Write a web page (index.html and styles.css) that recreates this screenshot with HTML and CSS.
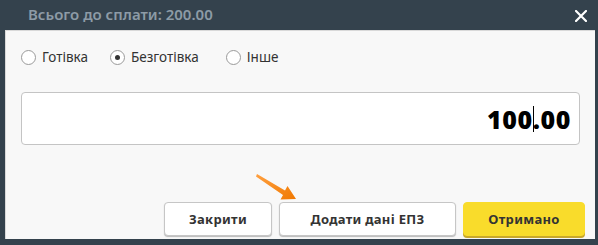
FILE: index.html
```html
<!DOCTYPE html>
<html lang="uk">
<head>
    <meta charset="UTF-8">
    <title>Оплата</title>
    <link rel="stylesheet" href="styles.css">
</head>
<body>
    <div class="dialog">
        <div class="dialog-header">
            <span class="dialog-title">Всього до сплати: 200.00</span>
            <span class="close-btn">
                <svg width="12" height="12" viewBox="0 0 12 12"><path d="M1 1L11 11M11 1L1 11" stroke="#fff" stroke-width="2.2" stroke-linecap="square"/></svg>
            </span>
        </div>
        <div class="dialog-body">
            <div class="pay-types">
                <label class="radio"><span class="radio-circle"></span>Готівка</label>
                <label class="radio"><span class="radio-circle checked"></span>Безготівка</label>
                <label class="radio"><span class="radio-circle"></span>Інше</label>
            </div>
            <div class="amount-box">
                <span class="amount">100<span class="caret"></span>.00</span>
            </div>
            <div class="actions">
                <button class="btn">Закрити</button>
                <button class="btn btn-wide">Додати дані ЕПЗ</button>
                <button class="btn btn-yellow">Отримано</button>
            </div>
            <svg class="hint-arrow" width="44" height="30" viewBox="0 0 44 30">
                <defs>
                    <linearGradient id="ag" x1="0" y1="0" x2="1" y2="1">
                        <stop offset="0" stop-color="#ffa040"/>
                        <stop offset="1" stop-color="#f07800"/>
                    </linearGradient>
                </defs>
                <path d="M1 2 L29 18.5 L31.5 14 L40 27 L24.5 27.5 L27 23 L0 4.5 Z" fill="url(#ag)"/>
            </svg>
        </div>
    </div>
</body>
</html>
```

FILE: styles.css
```css
body {
    margin: 0;
    background-color: #34424d;
    font-family: "Noto Sans", "Open Sans", sans-serif;
}

.dialog {
    width: 598px;
    height: 245px;
    display: flex;
    flex-direction: column;
}

.dialog-header {
    height: 30px;
    display: flex;
    align-items: center;
    justify-content: space-between;
    padding: 0 11px 0 28px;
}

.dialog-title {
    color: #8d9ba6;
    font-size: 15px;
    font-weight: 600;
    margin-top: -2px;
}

.close-btn {
    display: flex;
    margin-top: 2px;
}

.dialog-body {
    position: relative;
    margin: 0 3px 6px 5px;
    flex: 1;
    background: #f8f8f8;
    border-left: 1px solid #d9d9d9;
    border-top: 1px solid #d9d9d9;
    padding: 0 15px 0 15px;
    display: flex;
    flex-direction: column;
}

.pay-types {
    display: flex;
    height: 50px;
    align-items: center;
    margin-top: 1px;
}

.radio {
    display: flex;
    align-items: center;
    font-size: 13.5px;
    color: #333;
    margin-right: 22px;
}

.radio:nth-child(2) {
    margin-right: 27px;
}

.radio-circle {
    width: 15px;
    height: 15px;
    box-sizing: border-box;
    border: 1px solid #9a9a9a;
    border-radius: 50%;
    background: #fff;
    margin-right: 6px;
    display: flex;
    align-items: center;
    justify-content: center;
}

.radio-circle.checked::after {
    content: "";
    width: 5px;
    height: 5px;
    border-radius: 50%;
    background: #333;
}

.amount-box {
    margin-top: 10px;
    height: 53px;
    box-sizing: border-box;
    border: 1px solid #c4c4c4;
    border-radius: 4px;
    background: #fff;
    display: flex;
    align-items: center;
    justify-content: flex-end;
    padding-right: 8px;
}

.amount {
    font-size: 25px;
    font-weight: 900;
    color: #000;
    letter-spacing: 0.6px;
    display: flex;
    align-items: center;
}

.caret {
    display: inline-block;
    width: 1px;
    height: 26px;
    background: #000;
    margin-right: -1px;
}

.actions {
    margin-top: auto;
    margin-bottom: 3px;
    display: flex;
    justify-content: flex-end;
    gap: 7px;
    margin-right: -5px;
}

.btn {
    height: 34px;
    width: 108px;
    background: #fff;
    border: 1px solid #c6c6c6;
    border-radius: 4px;
    box-shadow: 0 1px 1px rgba(0, 0, 0, 0.25);
    font-family: "Noto Sans", "Open Sans", sans-serif;
    font-size: 13px;
    font-weight: 700;
    letter-spacing: 0.3px;
    color: #333;
}

.btn-wide {
    width: 177px;
}

.btn-yellow {
    width: 122px;
    background: #f9dc2b;
    border-color: #f9dc2b;
    box-shadow: 0 2px 0 #c9a82a;
}

.hint-arrow {
    position: absolute;
    left: 250px;
    top: 141px;
}
```
